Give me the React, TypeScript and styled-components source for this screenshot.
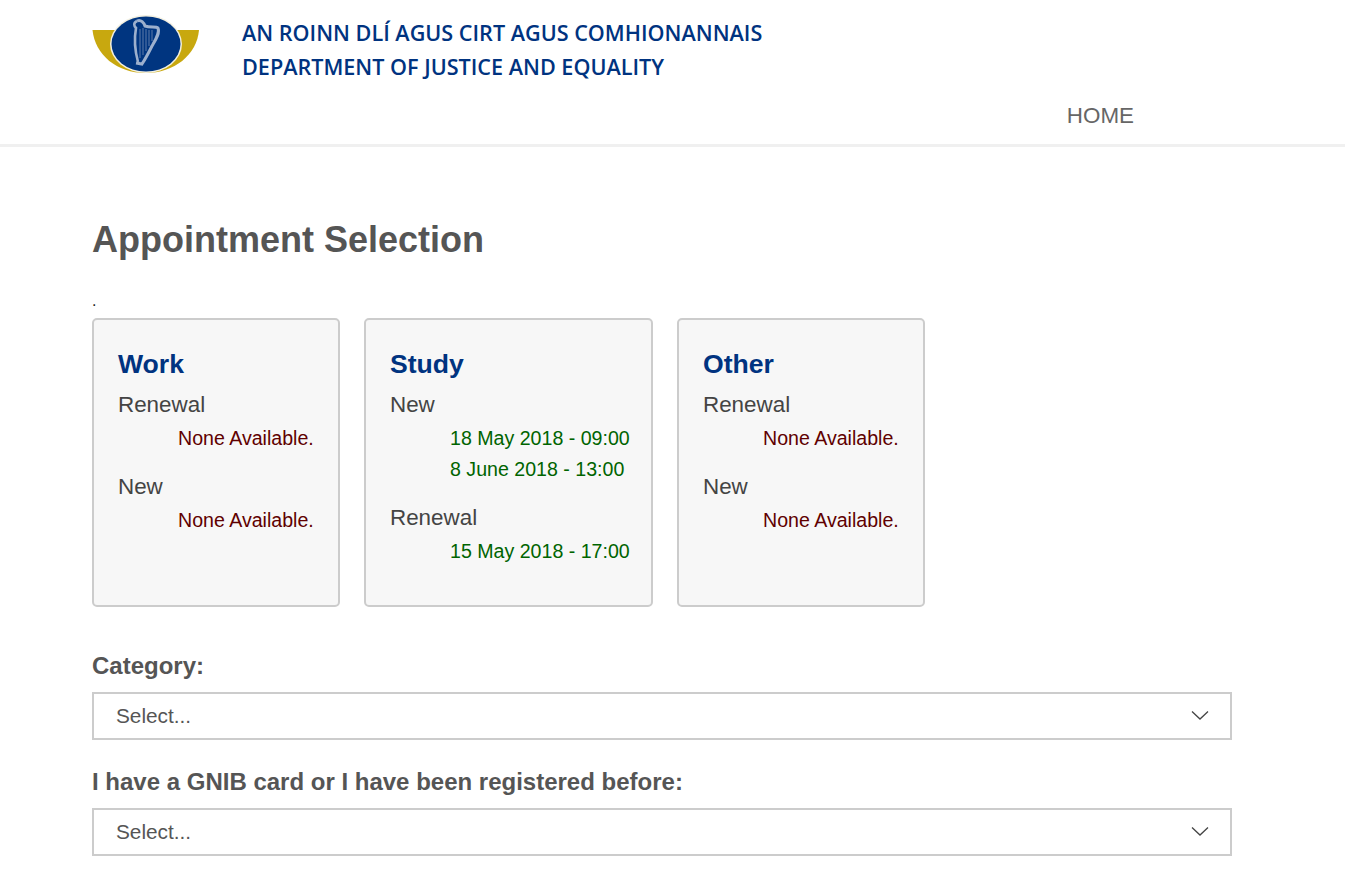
import React from 'react'
import styled, {createGlobalStyle} from 'styled-components'

type Slot = {text: string}
type Group = {label: string, slots: Slot[], available: boolean}
type CardData = {title: string, width: number, groups: Group[]}

const cards: CardData[] = [
	{
		title: 'Work',
		width: 248,
		groups: [
			{label: 'Renewal', available: false, slots: [{text: 'None Available.'}]},
			{label: 'New', available: false, slots: [{text: 'None Available.'}]},
		],
	},
	{
		title: 'Study',
		width: 289,
		groups: [
			{label: 'New', available: true, slots: [{text: '18 May 2018 - 09:00'}, {text: '8 June 2018 - 13:00'}]},
			{label: 'Renewal', available: true, slots: [{text: '15 May 2018 - 17:00'}]},
		],
	},
	{
		title: 'Other',
		width: 248,
		groups: [
			{label: 'Renewal', available: false, slots: [{text: 'None Available.'}]},
			{label: 'New', available: false, slots: [{text: 'None Available.'}]},
		],
	},
]

const Logo = () => (
	<LogoSvg viewBox="0 0 108 60" width={108} height={60}>
		<path d="M0.5 15 H107 C105 40 82 58 53.5 58 C25 58 3 40 0.5 15 Z" fill="#c8a80f" />
		<ellipse cx="54" cy="29" rx="36" ry="29" fill="#f3f0e0" />
		<ellipse cx="54" cy="29" rx="34.5" ry="27.5" fill="#003580" />
		{/* harp */}
		<path d="M45 6 C49 4 52 8 53 11 C58 13 64 11 66 13 C68 18 64 24 60 31 C57 37 54 43 50 49 L44 48" fill="none" stroke="#9db0cd" strokeWidth="3" />
		<path d="M45 6 C41 8 42 11 44 13 C42 24 43 36 46 47" fill="none" stroke="#9db0cd" strokeWidth="2.6" />
		<path d="M48 14 V43 M51 13 V40 M54 14 V36 M57 15 V31 M60 15 V26" stroke="#5f7daa" strokeWidth="1" />
	</LogoSvg>
)

const Chevron = () => (
	<ChevronSvg viewBox="0 0 18 11" width={18} height={11}>
		<path d="M1 1.5 L9 9 L17 1.5" fill="none" stroke="#444" strokeWidth="1.3" />
	</ChevronSvg>
)

const App: React.FC = () => (
	<Page>
		<GlobalStyle />
		<Header>
			<Brand>
				<Logo />
				<BrandText>
					<div>AN ROINN DLÍ AGUS CIRT AGUS COMHIONANNAIS</div>
					<div>DEPARTMENT OF JUSTICE AND EQUALITY</div>
				</BrandText>
			</Brand>
			<Nav>
				<NavLink>HOME</NavLink>
			</Nav>
		</Header>
		<Main>
			<Heading>Appointment Selection</Heading>
			<Dot>.</Dot>
			<Cards>
				{cards.map(card => (
					<Card key={card.title} $width={card.width}>
						<CardTitle>{card.title}</CardTitle>
						{card.groups.map(group => (
							<GroupBlock key={group.label}>
								<GroupLabel>{group.label}</GroupLabel>
								{group.slots.map(slot => (
									<SlotText key={slot.text} $available={group.available}>{slot.text}</SlotText>
								))}
							</GroupBlock>
						))}
					</Card>
				))}
			</Cards>
			<Field>
				<FieldLabel>Category:</FieldLabel>
				<SelectBox>
					<span>Select...</span>
					<Chevron />
				</SelectBox>
			</Field>
			<Field>
				<FieldLabel>I have a GNIB card or I have been registered before:</FieldLabel>
				<SelectBox>
					<span>Select...</span>
					<Chevron />
				</SelectBox>
			</Field>
		</Main>
	</Page>
)

export default App

const GlobalStyle = createGlobalStyle`
	html, body {
		margin: 0;
		padding: 0;
		background: #fff;
		font-family: "Liberation Sans", Arial, sans-serif;
		overflow: hidden;
	}
`
const Page = styled.div`
	height: 870px;
	overflow: hidden;
`
const Header = styled.header`
	height: 144px;
	border-bottom: 3px solid #f0f0f0;
	padding: 0 92px;
`
const Brand = styled.div`
	display: flex;
	align-items: flex-start;
	padding-top: 15px;
`
const LogoSvg = styled.svg`
	display: block;
	flex: none;
	filter: blur(0.5px);
`
const BrandText = styled.div`
	margin-left: 42px;
	margin-top: 1px;
	font-family: "Open Sans", sans-serif;
	font-weight: 600;
	font-size: 21.6px;
	line-height: 34px;
	color: #003380;
	white-space: nowrap;
`
const Nav = styled.nav`
	display: flex;
	justify-content: flex-end;
	padding-right: 119px;
	margin-top: 18px;
`
const NavLink = styled.a`
	font-size: 22.4px;
	line-height: 28px;
	color: #666;
`
const Main = styled.main`
	padding: 71px 113px 0 92px;
`
const Heading = styled.h1`
	margin: 0;
	font-size: 36px;
	line-height: 44px;
	font-weight: 700;
	color: #555;
`
const Dot = styled.div`
	margin-top: 29px;
	font-size: 16px;
	line-height: 20px;
	height: 27px;
	color: #222;
`
const Cards = styled.div`
	display: flex;
	gap: 24px;
`
const Card = styled.div<{$width: number}>`
	box-sizing: border-box;
	width: ${p => p.$width}px;
	height: 289px;
	padding: 28px 24px 0 24px;
	background: #f7f7f7;
	border: 2px solid #ccc;
	border-radius: 5px;
`
const CardTitle = styled.h3`
	margin: 0 0 7px;
	font-size: 26.6px;
	line-height: 33px;
	padding-bottom: 1px;
	font-weight: 700;
	color: #003380;
`
const GroupBlock = styled.div`
	margin-bottom: 17px;
`
const GroupLabel = styled.div`
	margin-bottom: 3px;
	font-size: 22.4px;
	line-height: 31px;
	color: #444;
`
const SlotText = styled.div<{$available: boolean}>`
	padding-left: 60px;
	font-size: 19.6px;
	line-height: 31px;
	white-space: nowrap;
	color: ${p => p.$available ? '#006400' : '#600000'};
`
const Field = styled.div`
	margin-top: 45px;
	& + & {
		margin-top: 28px;
	}
`
const FieldLabel = styled.label`
	display: block;
	margin-bottom: 13px;
	font-size: 24px;
	line-height: 27px;
	font-weight: 700;
	color: #555;
`
const SelectBox = styled.div`
	box-sizing: border-box;
	display: flex;
	align-items: center;
	justify-content: space-between;
	height: 48px;
	padding: 0 21px 0 22px;
	background: #fff;
	border: 2px solid #ccc;
	font-size: 20.8px;
	color: #555;
`
const ChevronSvg = styled.svg`
	display: block;
	margin-top: -2px;
`
